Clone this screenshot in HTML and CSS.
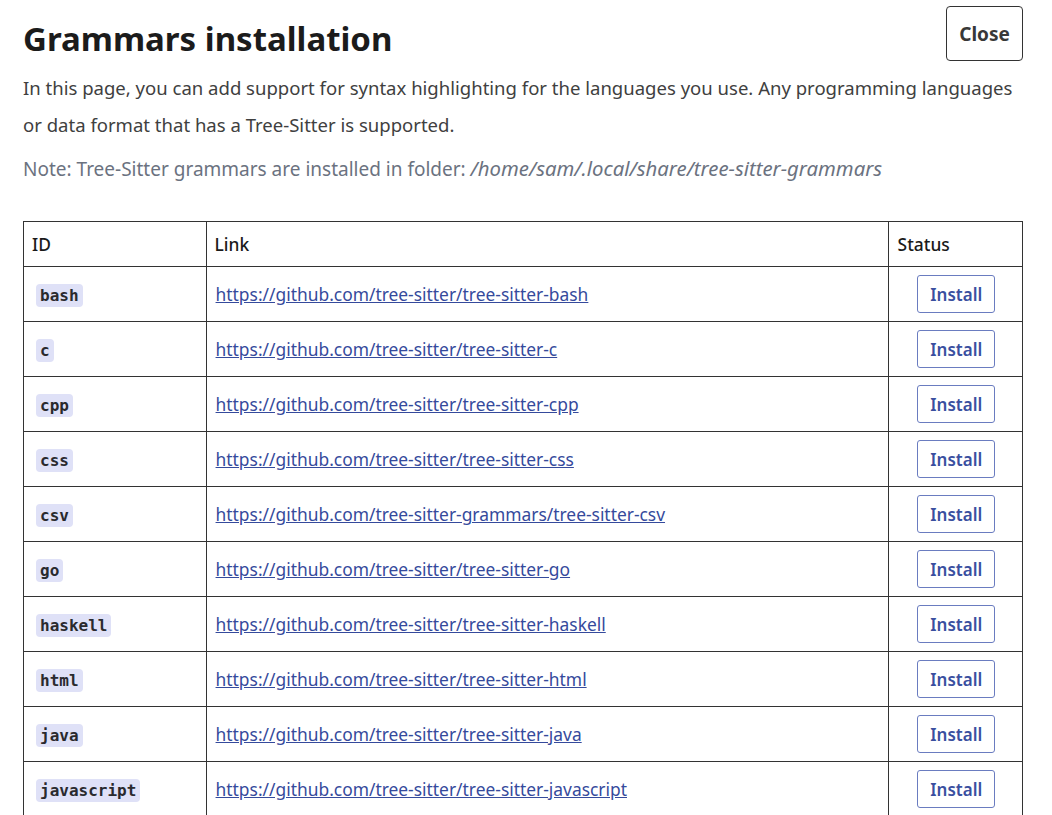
FILE: index.html
```html
<!DOCTYPE html>
<html lang="en">
<head>
<meta charset="utf-8">
<title>Grammars installation</title>
<link rel="stylesheet" href="styles.css">
</head>
<body>
<main class="page">
  <header class="top">
    <h1 class="title">Grammars installation</h1>
    <button class="close-btn">Close</button>
  </header>
  <p class="intro">In this page, you can add support for syntax highlighting for the languages you use. Any programming languages or data format that has a Tree-Sitter is supported.</p>
  <p class="note">Note: Tree-Sitter grammars are installed in folder: <em>/home/sam/.local/share/tree-sitter-grammars</em></p>
  <table class="grammars">
    <thead>
      <tr><th class="c-id">ID</th><th class="c-link">Link</th><th class="c-status">Status</th></tr>
    </thead>
    <tbody>
      <tr><td><code>bash</code></td><td><a href="#">https://github.com/tree-sitter/tree-sitter-bash</a></td><td class="st"><button class="install">Install</button></td></tr>
      <tr><td><code>c</code></td><td><a href="#">https://github.com/tree-sitter/tree-sitter-c</a></td><td class="st"><button class="install">Install</button></td></tr>
      <tr><td><code>cpp</code></td><td><a href="#">https://github.com/tree-sitter/tree-sitter-cpp</a></td><td class="st"><button class="install">Install</button></td></tr>
      <tr><td><code>css</code></td><td><a href="#">https://github.com/tree-sitter/tree-sitter-css</a></td><td class="st"><button class="install">Install</button></td></tr>
      <tr><td><code>csv</code></td><td><a href="#">https://github.com/tree-sitter-grammars/tree-sitter-csv</a></td><td class="st"><button class="install">Install</button></td></tr>
      <tr><td><code>go</code></td><td><a href="#">https://github.com/tree-sitter/tree-sitter-go</a></td><td class="st"><button class="install">Install</button></td></tr>
      <tr><td><code>haskell</code></td><td><a href="#">https://github.com/tree-sitter/tree-sitter-haskell</a></td><td class="st"><button class="install">Install</button></td></tr>
      <tr><td><code>html</code></td><td><a href="#">https://github.com/tree-sitter/tree-sitter-html</a></td><td class="st"><button class="install">Install</button></td></tr>
      <tr><td><code>java</code></td><td><a href="#">https://github.com/tree-sitter/tree-sitter-java</a></td><td class="st"><button class="install">Install</button></td></tr>
      <tr><td><code>javascript</code></td><td><a href="#">https://github.com/tree-sitter/tree-sitter-javascript</a></td><td class="st"><button class="install">Install</button></td></tr>
    </tbody>
  </table>
</main>
</body>
</html>
```

FILE: styles.css
```css
html, body {
  margin: 0;
  padding: 0;
  background: #ffffff;
}
body {
  font-family: "Noto Sans", "Open Sans", sans-serif;
  color: #1a1a1a;
}
.page {
  padding: 6px 29px 0 23px;
}
.top {
  display: flex;
  justify-content: space-between;
  align-items: flex-start;
}
.title {
  margin: 13px 0 0 0;
  font-size: 33px;
  font-weight: 700;
  line-height: 40px;
  color: #1b1b1b;
}
.close-btn {
  width: 77px;
  height: 55px;
  background: #fff;
  border: 1px solid #333;
  border-radius: 4px;
  font-family: inherit;
  font-size: 19px;
  font-weight: 700;
  color: #383838;
  padding: 0;
}
.intro {
  margin: 8px 0 0 0;
  font-size: 18.55px;
  line-height: 37px;
  color: #404040;
}
.note {
  margin: 10px 0 0 0;
  font-size: 19px;
  line-height: 30px;
  color: #6b7280;
}
.note em {
  font-style: italic;
  font-size: 1.07em;
}
.grammars {
  margin-top: 37px;
  width: 1000px;
  border-collapse: collapse;
  font-size: 17.4px;
}
.grammars th, .grammars td {
  border: 1px solid #333;
  text-align: left;
}
.grammars th {
  height: 44px;
  padding: 0 8px;
  font-weight: 500;
  color: #1a1a1a;
  vertical-align: middle;
}
.grammars td {
  height: 54px;
  padding: 0 9px;
  vertical-align: middle;
}
.grammars td.st {
  padding: 0 8px 0 10px;
  text-align: center;
}
.c-id { width: 165px; }
.c-link { width: 663px; }
.grammars th.c-status { width: 116px; padding: 0 8px 0 9px; }
code {
  display: inline-block;
  margin-left: 3px;
  padding: 0 4px;
  line-height: 23px;
  border-radius: 4px;
  background: #dfe1f7;
  font-family: "DejaVu Sans Mono", monospace;
  font-weight: 700;
  font-size: 16px;
  color: #2a2a2e;
}
a {
  color: #354a9c;
  text-decoration: underline;
}
.install {
  width: 78px;
  height: 38px;
  background: #fff;
  border: 1px solid #6a7cc0;
  border-radius: 3px;
  font-family: inherit;
  font-size: 17px;
  font-weight: 600;
  color: #3a4f9f;
  padding: 0;
}
```
